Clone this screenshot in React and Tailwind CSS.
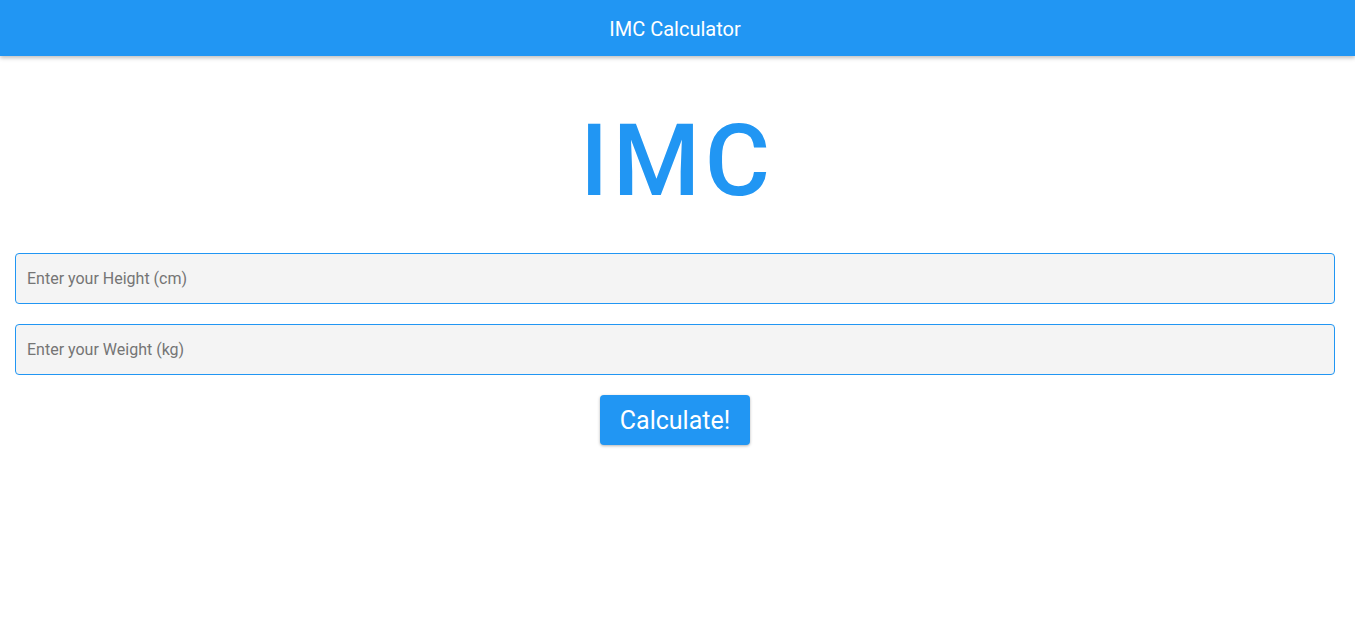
export default function App() {
  return (
    <div className="min-h-screen bg-white font-['Roboto','Liberation_Sans',sans-serif]">
      <header className="h-14 bg-[#2196f3] flex items-center justify-center pr-[5px] pt-[1px] shadow-[0_2px_4px_rgba(0,0,0,0.25)]">
        <h1 className="text-white text-[20px]">IMC Calculator</h1>
      </header>

      <main className="pl-[15px] pr-[20px]">
        <div className="h-[197px] flex items-center justify-center pt-[12px]">
          <span className="text-[#2196f3] text-[100px] font-medium leading-none tracking-[0.045em] pl-[0.045em]">IMC</span>
        </div>

        <div className="flex flex-col gap-5">
          <input
            type="number"
            placeholder="Enter your Height (cm)"
            className="h-[51px] w-full rounded border border-[#2196f3] bg-[#f4f4f4] px-[11px] text-base text-[#333] placeholder:text-[#757575] outline-none"
          />
          <input
            type="number"
            placeholder="Enter your Weight (kg)"
            className="h-[51px] w-full rounded border border-[#2196f3] bg-[#f4f4f4] px-[11px] text-base text-[#333] placeholder:text-[#757575] outline-none"
          />
        </div>

        <div className="flex justify-center mt-5">
          <button className="w-[150px] h-[50px] rounded bg-[#2196f3] text-white text-[25px] pt-[1px] shadow-[0_1px_3px_rgba(0,0,0,0.3)]">
            Calculate!
          </button>
        </div>
      </main>
    </div>
  )
}
